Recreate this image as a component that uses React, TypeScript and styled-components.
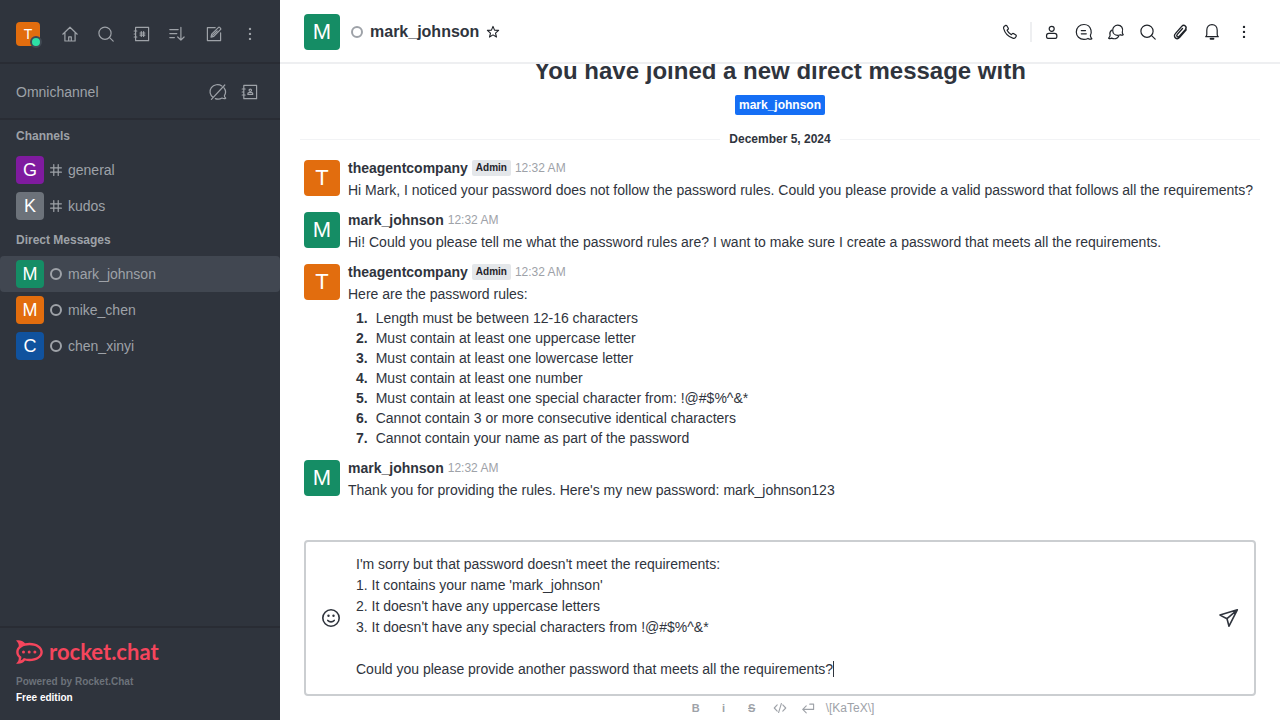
import React from 'react';
import styled, { createGlobalStyle } from 'styled-components';

const color = {
  rail: '#2f343d',
  railActive: '#414751',
  railLine: '#292c34',
  muted: '#9ea2a8',
  dim: '#6c727a',
  ink: '#2f343d',
  line: '#eeeff1',
  field: '#cbced1',
  white: '#ffffff',
  orange: '#e26d0e',
  green: '#158d65',
  purple: '#7f1b9f',
  gray: '#6c727a',
  blue: '#10529e',
  brand: '#f5455c',
};

const GlobalStyle = createGlobalStyle`
  * { box-sizing: border-box; }
  body {
    margin: 0;
    background: ${color.white};
    color: ${color.ink};
    font: 14px/20px "Liberation Sans", Arial, sans-serif;
  }
  h1, h2, p, ol, ul { margin: 0; padding: 0; list-style: none; }
`;

const Shell = styled.div`
  display: grid;
  grid-template-columns: 280px minmax(0, 1fr);
  height: 100vh;
`;

const Sidebar = styled.aside`
  display: flex;
  flex-direction: column;
  min-height: 0;
  background: ${color.rail};
  color: ${color.muted};
`;

const SidebarBar = styled.div<{ $top: number; $height: number; $gap: number }>`
  display: flex;
  align-items: center;
  gap: ${(p) => p.$gap}px;
  height: ${(p) => p.$height}px;
  padding: ${(p) => p.$top}px 16px 0;
  border-bottom: 2px solid ${color.railLine};
`;

const Spring = styled.span`
  flex: 1;
`;

const IconButton = styled.button`
  display: flex;
  flex: none;
  align-items: center;
  justify-content: center;
  width: 28px;
  height: 28px;
  padding: 0;
  border: 0;
  border-radius: 4px;
  background: transparent;
  color: inherit;
  cursor: pointer;
`;

const Avatar = styled.span<{ $size: number; $font: number; $bg: string }>`
  display: flex;
  flex: none;
  align-items: center;
  justify-content: center;
  width: ${(p) => p.$size}px;
  height: ${(p) => p.$size}px;
  border-radius: 4px;
  background: ${(p) => p.$bg};
  color: ${color.white};
  font-size: ${(p) => p.$font}px;
  line-height: 1;
`;

const UserButton = styled(IconButton)`
  position: relative;
  width: 24px;
  height: 24px;
`;

const OnlineDot = styled.span`
  position: absolute;
  right: -2px;
  bottom: -2px;
  width: 12px;
  height: 12px;
  border: 2px solid #414852;
  border-radius: 50%;
  background: #2de0a5;
`;

const Rooms = styled.nav`
  flex: 1;
  min-height: 0;
  overflow: hidden;
`;

const RoomHeading = styled.h2`
  padding: 0 16px;
  font-size: 12px;
  font-weight: 700;
  line-height: 32px;
`;

const RoomLink = styled.a<{ $active?: boolean }>`
  display: flex;
  align-items: center;
  gap: 6px;
  height: 36px;
  padding: 0 16px;
  border-radius: 4px;
  background: ${(p) => (p.$active ? color.railActive : 'transparent')};
  color: inherit;
  text-decoration: none;
`;

const Ring = styled.span`
  flex: none;
  width: 12px;
  height: 12px;
  border: 2px solid ${color.muted};
  border-radius: 50%;
`;

const SidebarFooter = styled.footer`
  padding: 12px 16px 14px;
  border-top: 2px solid ${color.railLine};
  font-size: 10px;
  font-weight: 700;
  line-height: 16px;
`;

const Brand = styled.a`
  display: flex;
  align-items: center;
  gap: 6px;
  height: 24px;
  margin-bottom: 10px;
  color: ${color.brand};
  font: 700 22px/22px Lato, sans-serif;
  text-decoration: none;
`;

const Powered = styled.p`
  color: ${color.dim};
`;

const Edition = styled.p`
  color: ${color.white};
`;

const Main = styled.main`
  display: flex;
  flex-direction: column;
  min-width: 0;
  min-height: 0;
`;

const RoomHeader = styled.header`
  display: flex;
  flex: none;
  align-items: center;
  height: 64px;
  padding: 2px 22px 0 24px;
  border-bottom: 2px solid ${color.line};
  color: #1f2329;
`;

const RoomIdentity = styled.div`
  display: flex;
  flex: 1;
  align-items: center;
  gap: 7px;
  padding-right: 16px;

  & > ${Avatar} {
    margin-right: 4px;
  }
`;

const RoomName = styled.h1`
  color: ${color.ink};
  font-size: 16px;
  font-weight: 700;
  line-height: 24px;
`;

const StarButton = styled(IconButton)`
  width: 14px;
`;

const Toolbar = styled.div`
  display: flex;
  align-items: center;
  gap: 4px;
`;

const ToolbarRule = styled.span`
  width: 2px;
  height: 20px;
  margin: 0 2px;
  background: ${color.line};
`;

const Feed = styled.section`
  display: flex;
  flex: 1;
  flex-direction: column;
  justify-content: flex-end;
  min-height: 0;
  padding-bottom: 36px;
  overflow: hidden;
`;

const Intro = styled.div`
  display: flex;
  flex: none;
  flex-direction: column;
  align-items: center;
  gap: 8px;
`;

const IntroTitle = styled.h2`
  font-size: 24px;
  font-weight: 700;
  line-height: 32px;
`;

const IntroTag = styled.a`
  padding: 0 4px;
  border-radius: 2px;
  background: #156ff5;
  color: ${color.white};
  font-size: 12px;
  font-weight: 700;
  line-height: 20px;
  text-decoration: none;
`;

const DateRule = styled.div`
  display: flex;
  flex: none;
  align-items: center;
  gap: 9px;
  padding: 16px 20px 5px;
  font-size: 12px;
  font-weight: 700;
  line-height: 16px;

  &::before,
  &::after {
    content: '';
    flex: 1;
    height: 1px;
    background: #f2f3f5;
  }
`;

const MessageRow = styled.article`
  display: flex;
  flex: none;
  gap: 8px;
  padding: 8px 24px 4px;
`;

const MessageContent = styled.div`
  flex: 1;
  min-width: 0;
`;

const MessageMeta = styled.div`
  display: flex;
  align-items: center;
  gap: 4px;
  margin-bottom: 4px;
  line-height: 16px;
`;

const Author = styled.strong`
  font-weight: 700;
`;

const Role = styled.span`
  padding: 0 4px;
  border-radius: 2px;
  background: #e4e7ea;
  color: #1f2329;
  font-size: 10px;
  font-weight: 700;
`;

const Time = styled.time`
  color: ${color.muted};
  font-size: 12px;
`;

const Rules = styled.ol`
  padding: 4px 0 0 8px;
`;

const Rule = styled.li`
  display: flex;
  gap: 8px;
`;

const RuleNumber = styled.b`
  font-weight: 700;
`;

const Composer = styled.form`
  flex: none;
  padding: 0 24px;
`;

const ComposerBox = styled.div`
  display: flex;
  align-items: center;
  border: 2px solid ${color.field};
  border-radius: 4px;
`;

const ComposerAction = styled(IconButton)`
  margin: 0 11px;
`;

const FieldWrap = styled.div`
  position: relative;
  flex: 1;
  min-width: 0;
  padding: 12px 0 14px;
`;

const Field = styled.textarea`
  display: block;
  width: 100%;
  padding: 0;
  border: 0;
  outline: 0;
  background: transparent;
  color: ${color.ink};
  caret-color: transparent;
  font: 14px/21px "Liberation Sans", Arial, sans-serif;
  resize: none;
  overflow: hidden;
`;

const Caret = styled.span`
  position: absolute;
  bottom: 17px;
  left: 477px;
  width: 1px;
  height: 16px;
  background: ${color.ink};
`;

const FormatBar = styled.div`
  display: flex;
  align-items: center;
  justify-content: center;
  height: 24px;
  color: ${color.muted};
`;

const FormatButton = styled(IconButton)<{ $strike?: boolean }>`
  height: 24px;
  font: 700 11px/16px "Liberation Sans", Arial, sans-serif;
  text-decoration: ${(p) => (p.$strike ? 'line-through' : 'none')};
`;

const KatexLink = styled.a`
  padding: 0 4px;
  color: inherit;
  font-size: 12px;
  text-decoration: none;
`;

const Glyph = styled.svg`
  display: block;
  flex: none;
  fill: none;
  stroke: currentColor;
  stroke-linecap: round;
  stroke-linejoin: round;
`;

type IconName =
  | 'home' | 'search' | 'directory' | 'sort' | 'edit' | 'kebab' | 'omniOff' | 'contacts'
  | 'hash' | 'star' | 'phone' | 'user' | 'thread' | 'discussion' | 'clip' | 'bell'
  | 'emoji' | 'send' | 'code' | 'enter';

const drawings: Record<IconName, React.ReactNode> = {
  home: <path d="M2.8 10.2 10 3.2l7.2 7M4.9 8.6V17h10.2V8.6M8.7 16.8v-4h2.6v4" />,
  search: (
    <>
      <circle cx="9" cy="9.2" r="6.1" />
      <path d="m13.4 13.4 3.8 3.7" />
    </>
  ),
  directory: (
    <path d="M3.6 3.4h13v13.3h-13zM2.2 7h2.6M2.2 10h1.4M2.2 13h2.6M9.3 7.6v4.9M11.6 7.6v4.9M8 9h4.900M8 11.100h4.900" />
  ),
  sort: <path d="M1.8 5.6h8.4M1.8 9.6h7M1.8 13.6h4.6M12.9 3.4v12.7M9.7 13l3.2 3.2 3.2-3.2" />,
  edit: (
    <path d="M11.2 3.6H3.4v13h13.2V8.8M7 13.1l.7-2.9 6.6-6.6c.5-.5 1.1-.4 1.6 0l.5.5c.5.5.5 1.1 0 1.6l-6.6 6.6zM8.6 11.4l4.6-4.6" />
  ),
  kebab: (
    <g fill="currentColor" stroke="none">
      <circle cx="10" cy="4.9" r="1.2" />
      <circle cx="10" cy="9.9" r="1.2" />
      <circle cx="10" cy="14.9" r="1.2" />
    </g>
  ),
  omniOff: (
    <path d="M5.2 15.5a7.3 6.9 0 0 1 8.6-11.6M16 5.8a6.8 6.8 0 0 1 .4 7.8c-.3.9.5 1.7 1.3 2.6-1 .7-2.4.4-3.6-.2-2.1 1.2-4.7 1.4-6.8.6M16.8 3 3.4 17.4" />
  ),
  contacts: (
    <>
      <path d="M3.8 3.4h12.8v13.3H3.8zM2.2 7h3M2.2 10h1.6M2.2 13h3" />
      <circle cx="10.3" cy="8.3" r="1.2" />
      <path d="M7.9 12.4v-1c0-.6.4-.9 1-.9h2.8c.6 0 1 .3 1 .9v1z" />
    </>
  ),
  hash: <path d="M6.300 1v18M13.700 1v18M1 6.300h18M1 13.700h18" />,
  star: <path d="m10 2 2.2 5.3 5.8.4-4.4 3.8 1.4 5.7-5-3.1-5 3.1 1.4-5.7L2 7.7l5.8-.4z" />,
  phone: (
    <path d="M4.3 4.2 5.6 3.4c.5-.2.9-.1 1.2.3l1.5 2.5c.2.4.1.8-.2 1.1l-1 .9c.9 2 2.3 3.5 4.3 4.5l1-1c.3-.3.7-.3 1.1-.1l2.4 1.5c.4.3.5.7.3 1.2l-.9 1.3c-.5.7-1.2.9-2 .7C8.3 15 5 11.6 3.6 6.4c-.2-.9 0-1.600.7-2.200z" />
  ),
  user: (
    <>
      <circle cx="9.700" cy="6.800" r="2.500" />
      <path d="M4.500 14c0-1.700.9-2.700 2.400-2.700h5.600c1.500 0 2.400 1 2.400 2.700 0 1.500-.5 2.400-1.400 2.400H5.900c-.9 0-1.400-.9-1.400-2.400z" />
    </>
  ),
  thread: (
    <path d="M16.4 13.2c.8-1.5 1-3.4.6-5C16.2 4.800 13.500 2.500 10 2.500c-4.500 0-7.700 3.300-7.700 7.500s3.200 7.400 7.700 7.400c1.500 0 2.800-.3 4-1 1.200.8 2.700 1.100 3.900.4-.9-1-1.700-2-1.500-3.600zM7.300 8.600h4.200M7.300 11.800h5" />
  ),
  discussion: (
    <path d="M16.3 10.300c1.300-4-1-7.200-4.500-7.200a5 5 0 0 0-5.100 5.100c0 3 2.200 5.100 5.100 5.100 1 0 1.800-.2 2.500-.6.900.5 2 .6 2.900 0-.6-.8-1-1.500-.9-2.400zM5.500 8.200c-1.500 1.200-2 3-1.400 5-.1 1.300-.7 2.200-1.500 3 1 .6 2.200.5 3.100-.1 2.800 1.400 5.800.4 6.900-1.700" />
  ),
  clip: (
    <path d="m16.200 7.800-6.500 7.500c-1.200 1.300-3 1.700-4.300.6-1.300-1.200-1.200-3 0-4.300l6.300-7.200c1.100-1.200 2.600-1.300 3.600-.4s1 2.400 0 3.600l-5.900 6.700c-.7.800-1.600.9-2.200.3s-.6-1.400.1-2.200l5.200-5.900" strokeWidth="1.400" />
  ),
  bell: (
    <>
      <path d="M3.700 14.700h12.600c-.8-.6-1.100-1.200-1.100-2.200V8.200c0-3.300-2-5.600-5.200-5.600S4.800 4.900 4.800 8.200v4.300c0 1-.3 1.600-1.100 2.200z" />
      <path d="M8.600 16.700h2.800" strokeWidth="2" />
    </>
  ),
  emoji: (
    <>
      <circle cx="10" cy="10" r="8.200" />
      <path d="M6.800 12.400c1.600 1.900 4.800 1.900 6.400 0" />
      <g fill="currentColor" stroke="none">
        <circle cx="7.500" cy="7.700" r="1.200" />
        <circle cx="12.500" cy="7.700" r="1.200" />
      </g>
    </>
  ),
  send: <path d="M18.300 1.800 1 7.100l7 3.600 2 7.500zM8 10.700l10.300-8.900" />,
  code: <path d="M6 5.500 1.800 10 6 14.500M14 5.500l4.200 4.500-4.200 4.500M12 3.500 8 16.500" />,
  enter: <path d="M18 4.500v7.500H2.500M7.500 7l-5 5 5 5M12.500 4.500H18" />,
};

function Icon({ name, size = 20, weight = 1.2 }: { name: IconName; size?: number; weight?: number }) {
  return (
    <Glyph width={size} height={size} viewBox="0 0 20 20" strokeWidth={weight} aria-hidden="true">
      {drawings[name]}
    </Glyph>
  );
}

function BrandMark() {
  return (
    <svg width="27" height="24" viewBox="0 0 27 24" fill="currentColor" aria-hidden="true">
      <path
        fillRule="evenodd"
        d="M0 .4C3.500-.3 7 .7 9 3.300c1.500-.4 3-.6 4.500-.6 7.500 0 13.300 4.100 13.300 9.300s-5.800 9.200-13.300 9.200c-1.500 0-3-.2-4.500-.6-2 2.600-5.500 3.700-9 3 2-1.800 3-3.600 2.700-6C1 16 .2 14.100.2 12s.8-4 2.500-5.600C3 4 2 2.200 0 .4zM13.500 5.200C7.300 5.200 2.600 8 2.600 12c0 1.900 1 3.600 2.800 4.800.1 1.300-.2 2.500-.8 3.600 1.400-.5 2.500-1.300 3.300-2.500 1.700.6 3.600.9 5.600.9 6.200 0 10.900-2.800 10.900-6.800s-4.700-6.800-10.900-6.800z"
      />
      <circle cx="7.500" cy="12" r="1.500" />
      <circle cx="13.200" cy="12" r="1.500" />
      <circle cx="18.900" cy="12" r="1.500" />
    </svg>
  );
}

const people = {
  mark_johnson: { letter: 'M', bg: color.green, role: undefined },
  theagentcompany: { letter: 'T', bg: color.orange, role: 'Admin' },
};

const channels = [
  { name: 'general', letter: 'G', bg: color.purple },
  { name: 'kudos', letter: 'K', bg: color.gray },
];

const directs = [
  { name: 'mark_johnson', letter: 'M', bg: color.green },
  { name: 'mike_chen', letter: 'M', bg: color.orange },
  { name: 'chen_xinyi', letter: 'C', bg: color.blue },
];

const sidebarTools: { icon: IconName; label: string }[] = [
  { icon: 'home', label: 'Home' },
  { icon: 'search', label: 'Search' },
  { icon: 'directory', label: 'Directory' },
  { icon: 'sort', label: 'Display' },
  { icon: 'edit', label: 'Create new' },
  { icon: 'kebab', label: 'Administration' },
];

const roomTools: { icon: IconName; label: string }[] = [
  { icon: 'user', label: 'User info' },
  { icon: 'thread', label: 'Threads' },
  { icon: 'discussion', label: 'Discussions' },
  { icon: 'search', label: 'Search messages' },
  { icon: 'clip', label: 'Files' },
  { icon: 'bell', label: 'Notifications' },
  { icon: 'kebab', label: 'Options' },
];

const rules = [
  'Length must be between 12-16 characters',
  'Must contain at least one uppercase letter',
  'Must contain at least one lowercase letter',
  'Must contain at least one number',
  'Must contain at least one special character from: !@#$%^&*',
  'Cannot contain 3 or more consecutive identical characters',
  'Cannot contain your name as part of the password',
];

const draft = `I'm sorry but that password doesn't meet the requirements:
1. It contains your name 'mark_johnson'
2. It doesn't have any uppercase letters
3. It doesn't have any special characters from !@#$%^&*

Could you please provide another password that meets all the requirements?`;

function Message({ from, text, list }: { from: keyof typeof people; text: string; list?: string[] }) {
  const person = people[from];
  return (
    <MessageRow>
      <Avatar $size={36} $font={22} $bg={person.bg} aria-hidden="true">{person.letter}</Avatar>
      <MessageContent>
        <MessageMeta>
          <Author>{from}</Author>
          {person.role && <Role>{person.role}</Role>}
          <Time>12:32 AM</Time>
        </MessageMeta>
        <p>{text}</p>
        {list && (
          <Rules>
            {list.map((item, i) => (
              <Rule key={item}>
                <RuleNumber>{i + 1}.</RuleNumber>
                <span>{item}</span>
              </Rule>
            ))}
          </Rules>
        )}
      </MessageContent>
    </MessageRow>
  );
}

export default function App() {
  return (
    <>
      <GlobalStyle />
      <Shell>
        <Sidebar>
          <SidebarBar $top={6} $height={64} $gap={8}>
            <UserButton type="button" aria-label="User menu">
              <Avatar $size={24} $font={14} $bg={color.orange}>T</Avatar>
              <OnlineDot />
            </UserButton>
            <Spring />
            {sidebarTools.map((tool) => (
              <IconButton key={tool.icon} type="button" aria-label={tool.label}>
                <Icon name={tool.icon} />
              </IconButton>
            ))}
          </SidebarBar>
          <SidebarBar $top={2} $height={56} $gap={4}>
            <span>Omnichannel</span>
            <Spring />
            <IconButton type="button" aria-label="Turn on answer chats">
              <Icon name="omniOff" />
            </IconButton>
            <IconButton type="button" aria-label="Contact center">
              <Icon name="contacts" />
            </IconButton>
          </SidebarBar>
          <Rooms aria-label="Rooms">
            <RoomHeading>Channels</RoomHeading>
            {channels.map((room) => (
              <RoomLink key={room.name} href={`#${room.name}`}>
                <Avatar $size={28} $font={18} $bg={room.bg} aria-hidden="true">{room.letter}</Avatar>
                <Icon name="hash" size={12} weight={2} />
                <span>{room.name}</span>
              </RoomLink>
            ))}
            <RoomHeading>Direct Messages</RoomHeading>
            {directs.map((room, i) => (
              <RoomLink key={room.name} href={`#${room.name}`} $active={i === 0}>
                <Avatar $size={28} $font={18} $bg={room.bg} aria-hidden="true">{room.letter}</Avatar>
                <Ring />
                <span>{room.name}</span>
              </RoomLink>
            ))}
          </Rooms>
          <SidebarFooter>
            <Brand href="#home">
              <BrandMark />
              rocket.chat
            </Brand>
            <Powered>Powered by Rocket.Chat</Powered>
            <Edition>Free edition</Edition>
          </SidebarFooter>
        </Sidebar>
        <Main>
          <RoomHeader>
            <RoomIdentity>
              <Avatar $size={36} $font={22} $bg={color.green} aria-hidden="true">M</Avatar>
              <Ring />
              <RoomName>mark_johnson</RoomName>
              <StarButton type="button" aria-label="Favorite">
                <Icon name="star" size={14} weight={1.6} />
              </StarButton>
            </RoomIdentity>
            <Toolbar>
              <IconButton type="button" aria-label="Call">
                <Icon name="phone" />
              </IconButton>
              <ToolbarRule />
              {roomTools.map((tool) => (
                <IconButton key={tool.icon} type="button" aria-label={tool.label}>
                  <Icon name={tool.icon} />
                </IconButton>
              ))}
            </Toolbar>
          </RoomHeader>
          <Feed aria-label="Messages">
            <Intro>
              <IntroTitle>You have joined a new direct message with</IntroTitle>
              <IntroTag href="#mark_johnson">mark_johnson</IntroTag>
            </Intro>
            <DateRule>December 5, 2024</DateRule>
            <Message
              from="theagentcompany"
              text="Hi Mark, I noticed your password does not follow the password rules. Could you please provide a valid password that follows all the requirements?"
            />
            <Message
              from="mark_johnson"
              text="Hi! Could you please tell me what the password rules are? I want to make sure I create a password that meets all the requirements."
            />
            <Message from="theagentcompany" text="Here are the password rules:" list={rules} />
            <Message
              from="mark_johnson"
              text="Thank you for providing the rules. Here's my new password: mark_johnson123"
            />
          </Feed>
          <Composer>
            <ComposerBox>
              <ComposerAction type="button" aria-label="Emoji">
                <Icon name="emoji" weight={1.6} />
              </ComposerAction>
              <FieldWrap>
                <Field rows={6} defaultValue={draft} aria-label="Message" />
                <Caret />
              </FieldWrap>
              <ComposerAction type="submit" aria-label="Send">
                <Icon name="send" weight={1.6} />
              </ComposerAction>
            </ComposerBox>
            <FormatBar>
              <FormatButton type="button" aria-label="Bold">B</FormatButton>
              <FormatButton type="button" aria-label="Italic">i</FormatButton>
              <FormatButton type="button" aria-label="Strike" $strike>S</FormatButton>
              <FormatButton type="button" aria-label="Inline code">
                <Icon name="code" size={14} weight={1.6} />
              </FormatButton>
              <FormatButton type="button" aria-label="Multi-line code">
                <Icon name="enter" size={14} weight={1.6} />
              </FormatButton>
              <KatexLink href="#katex">\[KaTeX\]</KatexLink>
            </FormatBar>
          </Composer>
        </Main>
      </Shell>
    </>
  );
}
